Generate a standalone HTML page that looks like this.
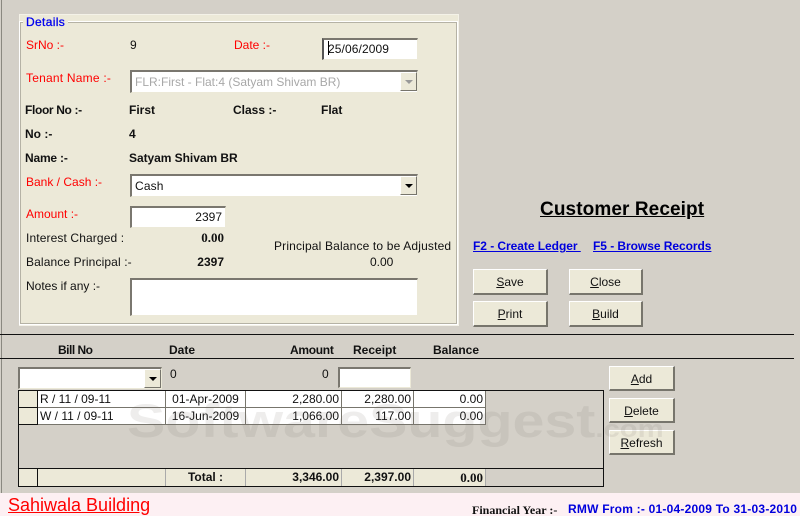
<!DOCTYPE html>
<html><head><meta charset="utf-8">
<style>
html,body{margin:0;padding:0}
#r{position:relative;width:800px;height:516px;background:#D4D0C8;overflow:hidden;font:12px/14px "Liberation Sans",sans-serif;color:#111}
#r *{position:absolute;box-sizing:border-box}
#r u{position:static}
.t{white-space:nowrap}
.red{color:#f00}
.b{font-weight:bold}
.in{background:#fff;border-top:2px solid #7a776f;border-left:2px solid #7a776f;border-right:1px solid #ece9d8;border-bottom:1px solid #ece9d8}
.btn{background:#ECE9D8;border-top:1px solid #fff;border-left:1px solid #fff;border-right:2px solid #77756c;border-bottom:2px solid #77756c;text-align:center;line-height:20px;white-space:nowrap}
.dd{background:#ECE9D8;border-top:1px solid #fff;border-left:1px solid #fff;border-right:1px solid #77756c;border-bottom:1px solid #77756c}
.dd i{left:5px;top:6px;width:0;height:0;border-left:4px solid transparent;border-right:4px solid transparent;border-top:4px solid #000}
.c{height:17px;background:#fff;border-right:1px solid #77756c;border-bottom:1px solid #77756c;line-height:16px;white-space:nowrap;padding:0 2px}
.h{height:17px;background:#ECE9D8;border-right:1px solid #111;border-bottom:1px solid #111}
.f{height:17px;background:#ECE9D8;border-right:1px solid #aaa;line-height:17px;white-space:nowrap;padding:0 2px;font-weight:bold}
.ra{text-align:right}
.l{color:#00d;font-weight:bold;text-decoration:underline}
</style></head><body>
<div id="r">
<div style="left:1px;top:0;width:1px;height:493px;background:#8a8880"></div>

<div style="left:19px;top:14px;width:440px;height:312px;background:#ECE9D8;border:1px solid #f4f2e8"></div>
<div style="left:19px;top:21px;width:439px;height:304px;border:1px solid #fff;outline:1px solid #b5b2a5;outline-offset:-2px"></div>
<div class="t" style="left:23px;top:15px;padding:0 3px;background:#ECE9D8;color:#00e;letter-spacing:.35px;-webkit-text-stroke:.3px #00e">Details</div>

<div class="t red" style="left:26px;top:38px">SrNo :-</div>
<div class="t" style="left:130px;top:38px">9</div>
<div class="t red" style="left:234px;top:38px">Date :-</div>
<div class="in t" style="left:322px;top:38px;width:96px;height:22px;line-height:18px;padding-left:4px;letter-spacing:.1px;border-left:2px solid #555">25/06/2009</div>
<div style="left:328px;top:41px;width:1px;height:14px;background:#000"></div>

<div class="t red" style="left:26px;top:71px;letter-spacing:.22px">Tenant Name :-</div>
<div class="in" style="left:130px;top:70px;width:288px;height:23px"></div>
<div class="t" style="left:135px;top:75px;color:#a8a8a8">FLR:First - Flat:4 (Satyam Shivam BR)</div>
<div class="dd" style="left:400px;top:72px;width:17px;height:19px"><i style="border-top-color:#999;top:7px;left:4px"></i></div>

<div class="t b" style="left:25px;top:103px;letter-spacing:-.35px">Floor No :-</div>
<div class="t b" style="left:129px;top:103px">First</div>
<div class="t b" style="left:233px;top:103px">Class :-</div>
<div class="t b" style="left:321px;top:103px">Flat</div>
<div class="t b" style="left:25px;top:127px">No :-</div>
<div class="t b" style="left:129px;top:127px">4</div>
<div class="t b" style="left:25px;top:151px;letter-spacing:-.2px">Name :-</div>
<div class="t b" style="left:129px;top:151px;letter-spacing:-.05px">Satyam Shivam BR</div>

<div class="t red" style="left:26px;top:175px">Bank / Cash :-</div>
<div class="in" style="left:130px;top:174px;width:288px;height:23px"></div>
<div class="t" style="left:135px;top:179px;letter-spacing:.15px">Cash</div>
<div class="dd" style="left:400px;top:176px;width:17px;height:19px"><i style="top:7px;left:4px"></i></div>

<div class="t red" style="left:26px;top:207px">Amount :-</div>
<div class="in t ra" style="left:130px;top:206px;width:96px;height:22px;line-height:19px;padding-right:3px">2397</div>

<div class="t" style="left:26px;top:231px;letter-spacing:.12px">Interest Charged :</div>
<div class="t b ra" style="left:164px;top:231px;width:60px;font-family:'Liberation Serif',serif;font-size:13px">0.00</div>
<div class="t" style="left:274px;top:239px;letter-spacing:.16px">Principal Balance to be Adjusted</div>
<div class="t" style="left:26px;top:255px;letter-spacing:.12px">Balance Principal :-</div>
<div class="t b ra" style="left:164px;top:255px;width:60px">2397</div>
<div class="t" style="left:370px;top:255px">0.00</div>
<div class="t" style="left:26px;top:279px">Notes if any :-</div>
<div class="in" style="left:130px;top:278px;width:288px;height:38px"></div>

<div class="t b" style="left:540px;top:199px;font-size:19px;line-height:21px;letter-spacing:.1px;text-decoration:underline;color:#000">Customer Receipt</div>
<div class="t l" style="left:473px;top:239px;letter-spacing:-.05px">F2 - Create Ledger&nbsp;</div>
<div class="t l" style="left:593px;top:239px;letter-spacing:-.05px">F5 - Browse Records</div>

<div class="btn" style="left:473px;top:269px;width:75px;height:26px;line-height:25px"><u>S</u>ave</div>
<div class="btn" style="left:569px;top:269px;width:74px;height:26px;line-height:25px"><u>C</u>lose</div>
<div class="btn" style="left:473px;top:301px;width:75px;height:26px;line-height:25px"><u>P</u>rint</div>
<div class="btn" style="left:569px;top:301px;width:74px;height:26px;line-height:25px"><u>B</u>uild</div>

<div style="left:0;top:334px;width:794px;height:1px;background:#111"></div>
<div style="left:0;top:358px;width:794px;height:1px;background:#111"></div>

<div class="t b" style="left:58px;top:343px;letter-spacing:-.5px">Bill No</div>
<div class="t b" style="left:169px;top:343px">Date</div>
<div class="t b" style="left:290px;top:343px;letter-spacing:-.3px">Amount</div>
<div class="t b" style="left:353px;top:343px">Receipt</div>
<div class="t b" style="left:433px;top:343px">Balance</div>

<div class="in" style="left:18px;top:367px;width:144px;height:22px"></div>
<div class="dd" style="left:144px;top:369px;width:17px;height:19px"><i style="top:7px;left:4px"></i></div>
<div class="t" style="left:170px;top:367px">0</div>
<div class="t" style="left:322px;top:367px">0</div>
<div class="in" style="left:338px;top:367px;width:73px;height:21px"></div>

<div class="btn" style="left:609px;top:366px;width:66px;height:25px;line-height:24px"><u>A</u>dd</div>
<div class="btn" style="left:609px;top:398px;width:66px;height:25px;line-height:24px"><u>D</u>elete</div>
<div class="btn" style="left:609px;top:430px;width:66px;height:25px;line-height:24px"><u>R</u>efresh</div>

<div style="left:18px;top:390px;width:586px;height:97px;border:1px solid #111"></div>
<div class="h" style="left:19px;top:391px;width:19px"></div>
<div class="h" style="left:19px;top:408px;width:19px"></div>
<div class="c" style="left:38px;top:391px;width:128px;padding-left:2px">R / 11 / 09-11</div>
<div class="c" style="left:166px;top:391px;width:80px;text-align:center">01-Apr-2009</div>
<div class="c ra" style="left:246px;top:391px;width:96px">2,280.00</div>
<div class="c ra" style="left:342px;top:391px;width:72px">2,280.00</div>
<div class="c ra" style="left:414px;top:391px;width:72px">0.00</div>
<div class="c" style="left:38px;top:408px;width:128px;padding-left:2px">W / 11 / 09-11</div>
<div class="c" style="left:166px;top:408px;width:80px;text-align:center">16-Jun-2009</div>
<div class="c ra" style="left:246px;top:408px;width:96px">1,066.00</div>
<div class="c ra" style="left:342px;top:408px;width:72px">117.00</div>
<div class="c ra" style="left:414px;top:408px;width:72px">0.00</div>

<div style="left:19px;top:468px;width:584px;height:1px;background:#111"></div>
<div class="f" style="left:19px;top:469px;width:19px;border-right:1px solid #111"></div>
<div class="f" style="left:38px;top:469px;width:128px"></div>
<div class="f" style="left:166px;top:469px;width:80px;text-align:center">Total :</div>
<div class="f ra" style="left:246px;top:469px;width:96px">3,346.00</div>
<div class="f ra" style="left:342px;top:469px;width:72px">2,397.00</div>
<div class="f ra" style="left:414px;top:469px;width:72px;font-family:'Liberation Serif',serif;font-size:13px">0.00</div>

<div class="t b" style="left:127px;top:394px;font-size:47px;line-height:54px;transform:scaleX(1.22);transform-origin:0 0;color:rgba(120,115,105,.13)">SoftwareSuggest<span style="position:static;font-size:24px">.com</span></div>

<div style="left:0;top:493px;width:800px;height:23px;background:#FDF0F3"></div>
<div class="t red" style="left:8px;top:495px;font-size:18px;line-height:20px;text-decoration:underline">Sahiwala Building</div>
<div class="t b" style="left:472px;top:503px;font-family:'Liberation Serif',serif;font-size:12px">Financial Year :-</div>
<div class="t b" style="left:568px;top:502px;color:#00d;letter-spacing:.22px">RMW From :- 01-04-2009 To 31-03-2010</div>
</div>
</body></html>
